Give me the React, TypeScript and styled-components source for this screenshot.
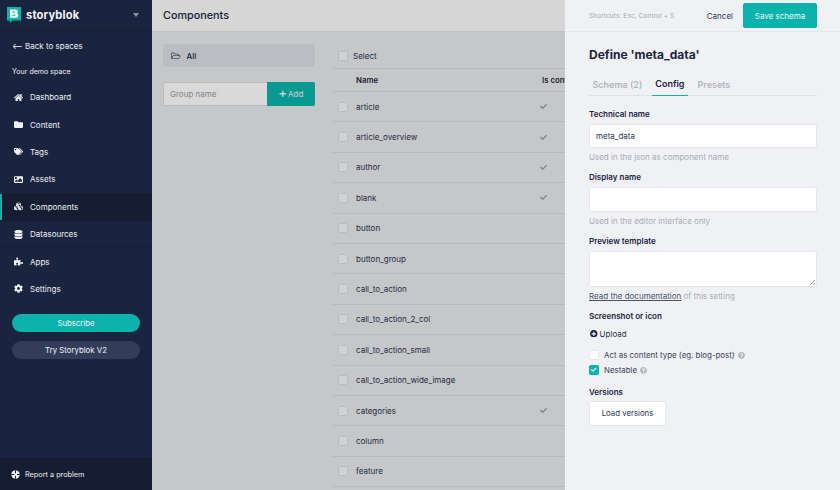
import React from "react";
import styled, { createGlobalStyle } from "styled-components";
import {
  FaHome, FaFolder, FaTags, FaImage, FaCubes, FaDatabase, FaPuzzlePiece, FaCog,
  FaPlusCircle, FaRegFolderOpen, FaCheck, FaQuestionCircle, FaPlus,
} from "react-icons/fa";

const Global = createGlobalStyle`
  html, body { margin: 0; padding: 0; width: 840px; height: 490px; overflow: hidden; }
  body { font-family: Inter, "Liberation Sans", sans-serif; }
  * { box-sizing: border-box; }
`;

const Page = styled.div`
  position: relative; display: flex; width: 840px; height: 490px; overflow: hidden;
  background: #f0f1f5; color: #1b243f;
`;
const Sidebar = styled.aside`
  width: 152px; flex: none; height: 490px; display: flex; flex-direction: column;
  background: #1b243f; color: #eef0f4;
`;
const Brand = styled.div`
  height: 31px; display: flex; align-items: center; padding: 0 12px 0 7px;
  border-bottom: 1px solid #161d34;
`;
const BrandName = styled.span`
  font-size: 11.2px; font-weight: 700; letter-spacing: 0.15px; margin-left: 5px; flex: 1; color: #f2f3f6;
`;
const Caret = styled.span`
  width: 0; height: 0; border-left: 3px solid transparent; border-right: 3px solid transparent;
  border-top: 4px solid #8d93a3; margin-right: 1px;
`;
const Back = styled.div`
  font-size: 8px; font-weight: 400; padding: 0 12px; height: 30px; display: flex; align-items: center;
`;
const Space = styled.div`
  font-size: 7.1px; font-weight: 400; padding: 0 12px; height: 20px; display: flex; align-items: center;
`;
const Nav = styled.nav`
  display: flex; flex-direction: column; margin-top: 3px;
`;
const NavItem = styled.div<{ $active?: boolean }>`
  height: 27.4px; display: flex; align-items: center; padding-left: 10px;
  font-size: 8px; font-weight: 400;
  border-bottom: 1px solid ${(p) => (p.$active ? "#161c31" : "#182039")};
  background: ${(p) => (p.$active ? "#161c31" : "transparent")};
  box-shadow: ${(p) => (p.$active ? "inset 2px 0 0 #0bb3ac" : "none")};
`;
const NavIcon = styled.span`
  width: 16px; display: flex; justify-content: center; margin-right: 4px; font-size: 9px; color: #f0f1f5;
  svg { display: block; }
`;
const NavLabel = styled.span``;
const Pill = styled.div<{ $primary?: boolean }>`
  margin: 0 12px; height: 18px; border-radius: 9px; display: flex; align-items: center; justify-content: center;
  font-size: 7.8px; font-weight: 400;
  background: ${(p) => (p.$primary ? "#0bb3ac" : "#333c58")};
  color: #f1f3f6;
`;
const Pills = styled.div`
  display: flex; flex-direction: column; gap: 9px; margin-top: 11px;
`;
const Footer = styled.div`
  margin-top: auto; height: 32px; background: #161c31; display: flex; align-items: center;
  padding-left: 11px; gap: 5px; font-size: 7.3px; font-weight: 400;
`;
const Main = styled.main`
  flex: 1; min-width: 0; display: flex; flex-direction: column; background: #e9eaed;
`;
const MainHead = styled.header`
  height: 32px; flex: none; display: flex; align-items: center; padding-left: 11px; background: #fcfcfc;
  border-bottom: 1px solid #e2e3e6; font-size: 10.8px; font-weight: 500; color: #1b243f;
`;
const Body = styled.div`
  display: flex; flex: 1; min-height: 0; padding: 11px 0 0 11px;
`;
const Groups = styled.div`
  width: 152px; flex: none; display: flex; flex-direction: column;
`;
const AllGroup = styled.div`
  height: 23px; background: #dddfe4; border-radius: 3px; display: flex; align-items: center; padding-left: 8px;
  gap: 6px; font-size: 8px; font-weight: 500; margin-top: 1px;
  svg { font-size: 9.5px; color: #555c70; }
`;
const GroupForm = styled.div`
  display: flex; margin-top: 15px; height: 24px;
`;
const GroupInput = styled.div`
  flex: 1; background: #fff; border: 1px solid #dcdde1; border-right: 0; border-radius: 2px 0 0 2px;
  font-size: 8px; color: #9a9ca5; display: flex; align-items: center; padding-left: 6px;
`;
const AddBtn = styled.div`
  width: 48px; background: #0bb3ac; color: #eef5f5; display: flex; align-items: center; justify-content: center; gap: 2px;
  font-size: 8px; font-weight: 400; border-radius: 0 2px 2px 0;
  svg { font-size: 7.5px; }
`;
const Table = styled.div`
  margin-left: 18px; flex: 1; display: flex; flex-direction: column; overflow: hidden;
`;
const Row = styled.div<{ $h?: number }>`
  height: ${(p) => p.$h ?? 30.4}px; flex: none; display: flex; align-items: center; border-bottom: 1px solid #d9dade;
  font-size: 8px; color: #2b3450; padding-left: 5px;
`;
const Box = styled.span`
  width: 10px; height: 10px; flex: none; background: #f6f7f8; border: 1px solid #dcdde1; border-radius: 1.5px;
`;
const NameCell = styled.span`
  width: 184px; margin-left: 8px; flex: none;
`;
const SelectLabel = styled.span`
  margin-left: 5px;
`;
const HeadName = styled.span`
  width: 186px; margin-left: 18px; flex: none; font-weight: 600; font-size: 7.8px; color: #1b243f;
`;
const HeadComp = styled.span`
  font-weight: 600; font-size: 7.8px; white-space: nowrap; color: #1b243f;
`;
const CheckCell = styled.span`
  font-size: 7px; color: #9c9da3; display: flex; margin-left: 0;
`;
const Overlay = styled.div`
  position: absolute; left: 152px; top: 0; right: 0; bottom: 0; background: rgba(0, 0, 0, 0.15); pointer-events: none;
`;
const Panel = styled.section`
  position: absolute; left: 565px; top: 0; width: 275px; height: 490px; background: #f0f1f5;
  display: flex; flex-direction: column; padding: 0 23px 0 24px;
`;
const PanelBar = styled.div`
  height: 32px; margin: 0 -23px 0 -24px; padding: 0 23px 0 24px; display: flex; align-items: center;
  border-bottom: 1px solid #e6e7ec;
`;
const Shortcuts = styled.span`
  font-size: 6.5px; color: #a4a6ae; flex: 1; font-weight: 400; letter-spacing: 0.1px;
`;
const Cancel = styled.span`
  font-size: 8px; font-weight: 400; color: #2b3450; margin-right: 10px;
`;
const Save = styled.div`
  width: 74px; height: 25px; background: #0bb3ac; color: #eef7f6; border-radius: 2px;
  font-size: 8px; font-weight: 400; display: flex; align-items: center; justify-content: center;
`;
const Title = styled.h2`
  margin: 15px 0 0; font-size: 12px; font-weight: 700; line-height: 16px; color: #1b243f;
`;
const Tabs = styled.div`
  display: flex; margin: 9px 0 3.5px; height: 24px; flex: none; border-bottom: 1px solid #dfe1e6;
`;
const Tab = styled.div<{ $active?: boolean }>`
  padding: 0 3.5px; margin: 0 6px 0 0; height: 24px; display: flex; align-items: center;
  font-size: 9px; font-weight: 600; color: ${(p) => (p.$active ? "#1b243f" : "#b4b6bd")};
  border-bottom: ${(p) => (p.$active ? "1px solid #0bb3ac" : "none")};
`;
const Label = styled.div`
  font-size: 8px; font-weight: 600; color: #1b243f; line-height: 12px; margin-top: 8px;
`;
const Field = styled.div<{ $h?: number }>`
  margin-top: 4px; height: ${(p) => p.$h ?? 24.5}px; flex: none; background: #fff; border: 1px solid #e6e7ec; border-radius: 2px;
  font-size: 8px; font-weight: 400; color: #2b3450; display: flex; align-items: center; padding-left: 6px; position: relative;
`;
const Grip = styled.svg`
  position: absolute; right: 1px; bottom: 1px;
`;
const Hint = styled.div`
  margin-top: 3px; font-size: 8px; line-height: 12px; color: #aaacb4;
`;
const Link = styled.span`
  color: #4b5369; text-decoration: underline;
`;
const Upload = styled.div`
  margin: 6px 0 0 1px; display: flex; align-items: center; gap: 2px; font-size: 8px; font-weight: 400; color: #2b3450;
  line-height: 12px;
  svg { font-size: 7.6px; color: #1b243f; }
`;
const CheckRow = styled.div<{ $first?: boolean }>`
  display: flex; align-items: center; height: 15px; flex: none; font-size: 7.9px; color: #3a4259;
  margin-top: ${(p) => (p.$first ? "8px" : "0")};
`;
const CheckBox = styled.span<{ $on?: boolean }>`
  width: 10px; height: 10px; border-radius: 1.5px; margin-right: 5px; flex: none;
  background: ${(p) => (p.$on ? "#0bb3ac" : "#fff")};
  border: 1px solid ${(p) => (p.$on ? "#0bb3ac" : "#e6e7ec")};
  display: flex; align-items: center; justify-content: center; color: #fff; font-size: 5.5px;
`;
const Help = styled.span`
  margin-left: 3px; display: flex; color: #b2b4ba; font-size: 7px;
`;
const LoadBtn = styled.div`
  margin-top: 3px; width: 77px; height: 25px; flex: none; background: #fff; border: 1px solid #e6e7ec; border-radius: 2px;
  display: flex; align-items: center; justify-content: center; font-size: 7.8px; font-weight: 400; color: #2b3450;
`;

function Logo() {
  return (
    <svg width="14" height="16" viewBox="0 0 14 16" aria-hidden="true">
      <path d="M0 0h14v13.500H5.500L2.800 16v-2.500H0z" fill="#0bb3ac" />
      <path
        fillRule="evenodd"
        fill="#fff"
        d="M3 2.500h5.200c1.700 0 2.600 1 2.600 2.200 0 .8-.4 1.400-1 1.700.9.300 1.500 1 1.500 2 0 1.400-1 2.300-2.800 2.300H3zM5.400 4.500v1.200h2.300c.4 0 .7-.2.700-.6s-.3-.6-.7-.6zM5.400 7.400v1.300h2.600c.5 0 .8-.3.8-.650s-.3-.650-.8-.650z"
      />
    </svg>
  );
}

function RingIcon() {
  return (
    <svg width="9" height="9" viewBox="0 0 9 9" aria-hidden="true">
      <circle cx="4.500" cy="4.500" r="4.200" fill="#f0f1f5" />
      <path d="M4.500 0.300v8.400M0.300 4.500h8.400" stroke="#161c31" strokeWidth="1" />
      <circle cx="4.500" cy="4.500" r="1.500" fill="#f0f1f5" />
    </svg>
  );
}

const nav: [string, React.ReactNode][] = [
  ["Dashboard", <FaHome />],
  ["Content", <FaFolder />],
  ["Tags", <FaTags />],
  ["Assets", <FaImage />],
  ["Components", <FaCubes />],
  ["Datasources", <FaDatabase />],
  ["Apps", <FaPuzzlePiece />],
  ["Settings", <FaCog />],
];

const rows: [string, boolean][] = [
  ["article", true],
  ["article_overview", true],
  ["author", true],
  ["blank", true],
  ["button", false],
  ["button_group", false],
  ["call_to_action", false],
  ["call_to_action_2_col", false],
  ["call_to_action_small", false],
  ["call_to_action_wide_image", false],
  ["categories", true],
  ["column", false],
  ["feature", false],
];

export default function App() {
  return (
    <Page>
      <Global />
      <Sidebar>
        <Brand>
          <Logo />
          <BrandName>storyblok</BrandName>
          <Caret />
        </Brand>
        <Back>⟵ Back to spaces</Back>
        <Space>Your demo space</Space>
        <Nav>
          {nav.map(([label, icon]) => (
            <NavItem key={label} $active={label === "Components"}>
              <NavIcon>{icon}</NavIcon>
              <NavLabel>{label}</NavLabel>
            </NavItem>
          ))}
        </Nav>
        <Pills>
          <Pill $primary>Subscribe</Pill>
          <Pill>Try Storyblok V2</Pill>
        </Pills>
        <Footer>
          <RingIcon />
          Report a problem
        </Footer>
      </Sidebar>
      <Main>
        <MainHead>Components</MainHead>
        <Body>
          <Groups>
            <AllGroup>
              <FaRegFolderOpen />
              All
            </AllGroup>
            <GroupForm>
              <GroupInput>Group name</GroupInput>
              <AddBtn>
                <FaPlus />
                Add
              </AddBtn>
            </GroupForm>
          </Groups>
          <Table>
            <Row $h={26}>
              <Box />
              <SelectLabel>Select</SelectLabel>
            </Row>
            <Row $h={23}>
              <HeadName>Name</HeadName>
              <HeadComp>Is content type</HeadComp>
            </Row>
            {rows.map(([name, isContent]) => (
              <Row key={name}>
                <Box />
                <NameCell>{name}</NameCell>
                {isContent && (
                  <CheckCell>
                    <FaCheck />
                  </CheckCell>
                )}
              </Row>
            ))}
          </Table>
        </Body>
      </Main>
      <Overlay />
      <Panel>
        <PanelBar>
          <Shortcuts>Shortcuts: Esc, Control + S</Shortcuts>
          <Cancel>Cancel</Cancel>
          <Save>Save schema</Save>
        </PanelBar>
        <Title>Define 'meta_data'</Title>
        <Tabs>
          <Tab>Schema (2)</Tab>
          <Tab $active>Config</Tab>
          <Tab>Presets</Tab>
        </Tabs>
        <Label>Technical name</Label>
        <Field>meta_data</Field>
        <Hint>Used in the json as component name</Hint>
        <Label>Display name</Label>
        <Field />
        <Hint>Used in the editor interface only</Hint>
        <Label>Preview template</Label>
        <Field $h={36}>
          <Grip width="5" height="5" viewBox="0 0 5 5">
            <path d="M0 5L5 0M3 5L5 3" stroke="#777" strokeWidth="0.7" />
          </Grip>
        </Field>
        <Hint>
          <Link>Read the documentation</Link> of this setting
        </Hint>
        <Label>Screenshot or icon</Label>
        <Upload>
          <FaPlusCircle />
          Upload
        </Upload>
        <CheckRow $first>
          <CheckBox />
          Act as content type (eg. blog-post)
          <Help>
            <FaQuestionCircle />
          </Help>
        </CheckRow>
        <CheckRow>
          <CheckBox $on>
            <FaCheck />
          </CheckBox>
          Nestable
          <Help>
            <FaQuestionCircle />
          </Help>
        </CheckRow>
        <Label>Versions</Label>
        <LoadBtn>Load versions</LoadBtn>
      </Panel>
    </Page>
  );
}
